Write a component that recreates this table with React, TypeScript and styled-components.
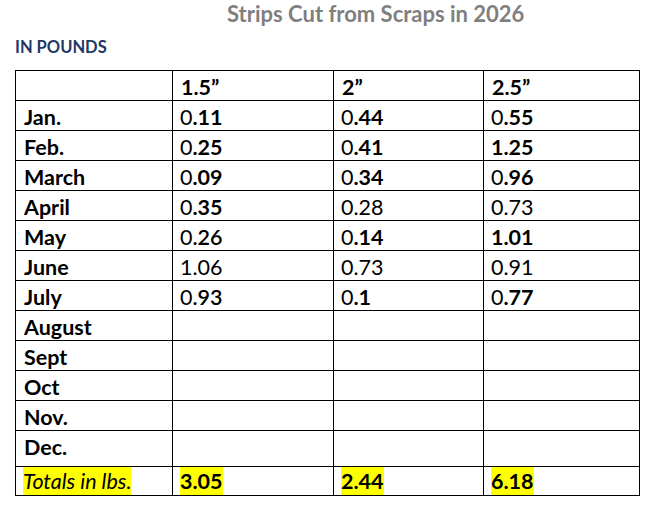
import React from "react";
import styled, { createGlobalStyle } from "styled-components";

const Global = createGlobalStyle`
  html, body { margin: 0; padding: 0; background: #ffffff; }
  body { font-family: Lato, "Open Sans", sans-serif; color: #000; }
`;

const Page = styled.div`
  width: 649px;
  height: 506px;
  box-sizing: border-box;
  padding: 1px 0 0 15px;
  display: flex;
  flex-direction: column;
`;

const Title = styled.h1`
  margin: 0 0 0 212px;
  font-size: 22px;
  line-height: 26px;
  font-weight: 700;
  color: #7f7f7f;
`;

const Subtitle = styled.h2`
  margin: 11px 0 0 0;
  font-size: 16.5px;
  line-height: 19px;
  font-weight: 700;
  color: #1f3864;
`;

const Table = styled.table`
  margin-top: 13px;
  width: 624px;
  border-collapse: collapse;
  table-layout: fixed;
  font-size: 21.5px;
`;

const Row = styled.tr<{ $h: number }>`
  height: ${(p) => p.$h}px;
`;

const Cell = styled.td<{ $label?: boolean }>`
  border: 1px solid #000;
  padding: 3px 0 0 ${(p) => (p.$label ? 8 : 7)}px;
  vertical-align: top;
  line-height: 26px;
  font-weight: ${(p) => (p.$label ? 700 : 400)};
  white-space: nowrap;
`;

const TotalCell = styled.td`
  border: 1px solid #000;
  padding: 0 0 0 7px;
  vertical-align: top;
  line-height: 28px;
  white-space: nowrap;
`;

const Strong = styled.span<{ $w?: number }>`
  font-weight: ${(p) => p.$w ?? 700};
`;

const Mark = styled.span<{ $italic?: boolean }>`
  display: inline-block;
  vertical-align: top;
  background: #ffff00;
  padding-top: 1px;
  line-height: 27px;
  font-style: ${(p) => (p.$italic ? "italic" : "normal")};
  font-weight: ${(p) => (p.$italic ? 400 : 700)};
`;

type Val = { lead: string; rest: string; lw: number; rw: number } | null;

const v = (s: string, mode: "split" | "bold" | "reg" | "semi"): Val => {
  if (mode === "bold") return { lead: "", rest: s, lw: 700, rw: 700 };
  if (mode === "reg") return { lead: "", rest: s, lw: 400, rw: 400 };
  if (mode === "semi") return { lead: s[0], rest: s.slice(1), lw: 400, rw: 600 };
  return { lead: s[0], rest: s.slice(1), lw: 400, rw: 700 };
};

const rows: { label: string; vals: Val[]; h?: number }[] = [
  { label: "Jan.", vals: [v("0.11", "split"), v("0.44", "split"), v("0.55", "split")] },
  { label: "Feb.", vals: [v("0.25", "split"), v("0.41", "split"), v("1.25", "bold")] },
  { label: "March", vals: [v("0.09", "split"), v("0.34", "split"), v("0.96", "split")] },
  { label: "April", vals: [v("0.35", "split"), v("0.28", "reg"), v("0.73", "reg")] },
  { label: "May", vals: [v("0.26", "semi"), v("0.14", "split"), v("1.01", "bold")] },
  { label: "June", vals: [v("1.06", "reg"), v("0.73", "reg"), v("0.91", "reg")] },
  { label: "July", vals: [v("0.93", "semi"), v("0.1", "split"), v("0.77", "split")] },
  { label: "August", vals: [null, null, null] },
  { label: "Sept", vals: [null, null, null] },
  { label: "Oct", vals: [null, null, null] },
  { label: "Nov.", vals: [null, null, null] },
  { label: "Dec.", vals: [null, null, null], h: 36 },
];

export default function App() {
  return (
    <>
      <Global />
      <Page>
        <Title>Strips Cut from Scraps in 2026</Title>
        <Subtitle>IN POUNDS</Subtitle>
        <Table>
          <colgroup>
            <col style={{ width: 157 }} />
            <col style={{ width: 161 }} />
            <col style={{ width: 150 }} />
            <col style={{ width: 156 }} />
          </colgroup>
          <tbody>
            <Row $h={30}>
              <Cell $label />
              <Cell $label>1.5”</Cell>
              <Cell $label>2”</Cell>
              <Cell $label>2.5”</Cell>
            </Row>
            {rows.map((r) => (
              <Row key={r.label} $h={r.h ?? 30}>
                <Cell $label>{r.label}</Cell>
                {r.vals.map((val, i) => (
                  <Cell key={i}>
                    {val && (
                      <>
                        <Strong $w={val.lw}>{val.lead}</Strong>
                        <Strong $w={val.rw}>{val.rest}</Strong>
                      </>
                    )}
                  </Cell>
                ))}
              </Row>
            ))}
            <Row $h={29}>
              <TotalCell>
                <Mark $italic>Totals in lbs.</Mark>
              </TotalCell>
              <TotalCell>
                <Mark>3.05</Mark>
              </TotalCell>
              <TotalCell>
                <Mark>2.44</Mark>
              </TotalCell>
              <TotalCell>
                <Mark>6.18</Mark>
              </TotalCell>
            </Row>
          </tbody>
        </Table>
      </Page>
    </>
  );
}
